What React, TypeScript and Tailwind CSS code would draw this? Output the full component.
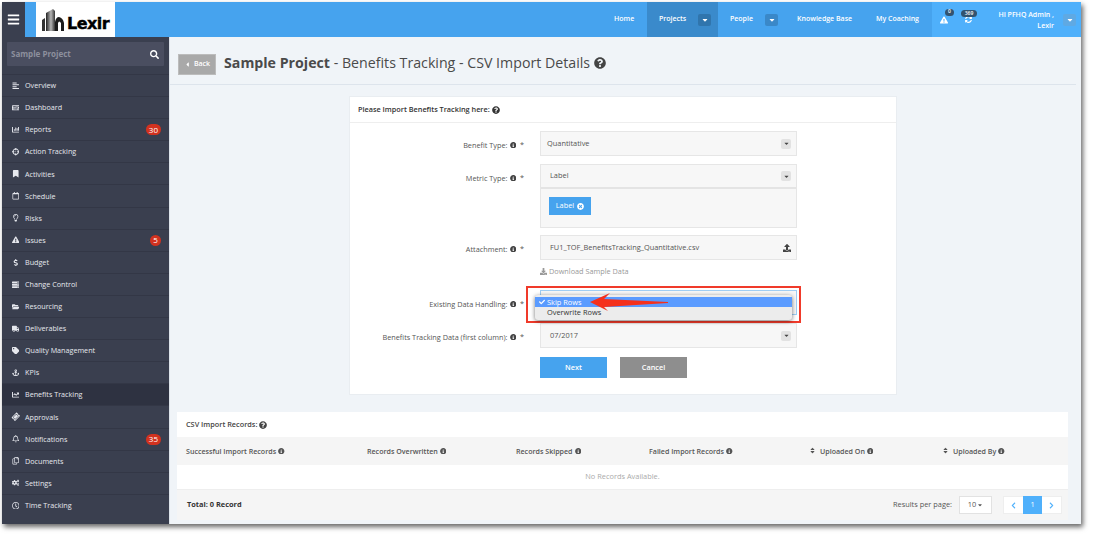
import { ReactNode } from "react";
import {
  FaAlignLeft, FaAnchor, FaBars, FaBookmark, FaCaretDown, FaCaretLeft, FaChartBar, FaChartLine, FaCheck,
  FaChevronLeft, FaChevronRight, FaCogs, FaCrosshairs, FaDollarSign, FaDownload, FaExclamationTriangle,
  FaFolderOpen, FaInfoCircle, FaKeyboard, FaQuestionCircle, FaRegBell, FaRegCalendar, FaRegClock, FaRegCopy,
  FaRegLightbulb, FaSearch, FaServer, FaSort, FaSyncAlt, FaTag, FaTicketAlt, FaTimesCircle, FaTruck, FaUpload,
} from "react-icons/fa";

const menu = [
  { name: "Overview", icon: <FaAlignLeft /> },
  { name: "Dashboard", icon: <FaKeyboard /> },
  { name: "Reports", icon: <FaChartBar />, badge: "30" },
  { name: "Action Tracking", icon: <FaCrosshairs /> },
  { name: "Activities", icon: <FaBookmark /> },
  { name: "Schedule", icon: <FaRegCalendar /> },
  { name: "Risks", icon: <FaRegLightbulb /> },
  { name: "Issues", icon: <FaExclamationTriangle />, badge: "5" },
  { name: "Budget", icon: <FaDollarSign /> },
  { name: "Change Control", icon: <FaServer /> },
  { name: "Resourcing", icon: <FaFolderOpen /> },
  { name: "Deliverables", icon: <FaTruck /> },
  { name: "Quality Management", icon: <FaTag /> },
  { name: "KPIs", icon: <FaAnchor /> },
  { name: "Benefits Tracking", icon: <FaChartLine />, active: true },
  { name: "Approvals", icon: <FaTicketAlt className="-rotate-45" /> },
  { name: "Notifications", icon: <FaRegBell />, badge: "35" },
  { name: "Documents", icon: <FaRegCopy /> },
  { name: "Settings", icon: <FaCogs /> },
  { name: "Time Tracking", icon: <FaRegClock /> },
];

const CaretBtn = ({ className }: { className: string }) => (
  <span className={`flex h-[12px] w-[13px] items-center justify-center rounded-[2px] text-[8px] text-white ${className}`}>
    <FaCaretDown />
  </span>
);

const SelectCaret = () => (
  <span className="flex h-[10px] w-[10px] items-center justify-center rounded-[2px] bg-[#e2e2e2] text-[7px] text-[#444]">
    <FaCaretDown />
  </span>
);

const Field = ({ label, children, className = "" }: { label: string; children: ReactNode; className?: string }) => (
  <div className={`flex items-start ${className}`}>
    <div className="flex h-[25px] w-[175px] items-center justify-end gap-[2px] pt-[3px] text-[7.3px] text-[#555]">
      <span>{label}</span>
      <FaInfoCircle className="text-[6.5px] text-[#444]" />
      <span className="ml-[2px] w-[5px]">*</span>
    </div>
    <div className="ml-[15px] w-[257px]">{children}</div>
  </div>
);

const Input = ({ children, className = "" }: { children: ReactNode; className?: string }) => (
  <div className={`flex h-[25px] items-center justify-between border border-[#e6e6e6] bg-[#f7f7f7] pl-[6px] pr-[5px] text-[7.4px] text-[#555] ${className}`}>
    {children}
  </div>
);

const Header = () => (
  <header className="flex h-[35px] bg-[#46a3ee] text-[7px] font-semibold text-white">
    <button className="flex w-[23px] items-center justify-center bg-[#3a3f4f] text-[13px]">
      <FaBars />
    </button>
    <div className="ml-[11px] flex w-[79px] items-end bg-white pb-[6px] pl-[6px]">
      <svg width="22" height="23" viewBox="0 0 22 23">
        <defs>
          <linearGradient id="tower" x1="0" y1="0" x2="1" y2="0">
            <stop offset="0" stopColor="#222" />
            <stop offset="0.55" stopColor="#b5b5b5" />
            <stop offset="1" stopColor="#333" />
          </linearGradient>
        </defs>
        <path d="M0 23V12L3 10V23Z" fill="#333" />
        <path d="M4 23V5L11 1L13 3V23Z" fill="url(#tower)" />
        <path d="M13 23V14Q14 9 17 9Q21 10 22 15V23H19V15Q17 12 16 15V23Z" fill="#1c1c1c" />
      </svg>
      <span className="ml-[3px] font-['DejaVu_Sans'] text-[16px] font-bold leading-[14px] tracking-[-0.5px] text-black [-webkit-text-stroke:0.4px_black]">Lexir</span>
    </div>
    <div className="flex-1" />
    <nav className="flex w-[332px] items-center pl-[14px]">
      <span className="w-[33px]">Home</span>
      <div className="flex h-full w-[71px] items-center bg-[#3a8acb] pl-[12px]">
        <span className="w-[39px]">Projects</span>
        <CaretBtn className="bg-[#3075ad]" />
      </div>
      <span className="ml-[12px] w-[35px]">People</span>
      <CaretBtn className="bg-[#3a88c8]" />
      <span className="ml-[19px] w-[79px]">Knowledge Base</span>
      <span>My Coaching</span>
    </nav>
    <div className="flex w-[149px] items-center bg-[#4fb0fb]">
      <div className="relative ml-[8px] text-[8px]">
        <FaExclamationTriangle />
        <span className="absolute left-[5px] top-[-7px] flex h-[7px] w-[9px] items-center justify-center rounded-full bg-[#33536f] text-[5px]">0</span>
      </div>
      <div className="relative ml-[17px] text-[7px]">
        <FaSyncAlt />
        <span className="absolute left-[-4px] top-[-6px] flex h-[7px] w-[16px] items-center justify-center rounded-full bg-[#33536f] text-[5px]">369</span>
      </div>
      <div className="ml-[8px] w-[74px] whitespace-nowrap text-right leading-[11px]">
        <div>HI PFHQ Admin ,</div>
        <div>Lexir</div>
      </div>
      <CaretBtn className="ml-[9px] shrink-0 bg-[#5fa9e3]" />
    </div>
  </header>
);

const Sidebar = () => (
  <aside className="flex w-[167px] shrink-0 flex-col bg-[#3a3f4f] pt-[5px] text-[7.2px] text-[#e6e8ee]">
    <div className="mx-[5px] mb-[8px] flex h-[24px] items-center justify-between rounded-[1px] bg-[#4a4e60] pl-[4px] pr-[5px]">
      <span className="text-[8px] font-bold text-[#8d909d]">Sample Project</span>
      <FaSearch className="text-[9px] text-white" />
    </div>
    {menu.map((item) => (
      <div
        key={item.name}
        className={`flex h-[22.1px] items-center border-t border-[#333746] pl-[6px] pr-[8px] ${item.active ? "bg-[#2e3241]" : ""}`}
      >
        <span className="flex w-[15px] justify-center text-[7.5px]">{item.icon}</span>
        <span className="ml-[2px] flex-1">{item.name}</span>
        {item.badge && (
          <span className="flex h-[11px] min-w-[11px] items-center justify-center rounded-full bg-[#d2321f] px-[3px] text-[8px] text-white">
            {item.badge}
          </span>
        )}
      </div>
    ))}
  </aside>
);

const ImportCard = () => (
  <section className="mx-auto mt-[11px] h-[299px] w-[548px] border border-[#e9edf1] bg-white">
    <div className="flex h-[26px] items-center gap-[2px] border-b border-[#eeeeee] pl-[8px] text-[7.3px] font-semibold text-[#333]">
      Please Import Benefits Tracking here: <FaQuestionCircle className="text-[8px]" />
    </div>
    <div className="pt-[8px]">
      <Field label="Benefit Type:">
        <Input>
          Quantitative
          <SelectCaret />
        </Input>
      </Field>
      <Field label="Metric Type:" className="mt-[8px]">
        <div className="h-[64px] border border-[#e6e6e6] bg-[#f7f7f7]">
          <div className="flex h-[24px] items-center justify-between border-b-2 border-[#e4e4e4] pl-[9px] pr-[5px] text-[7.4px] text-[#555]">
            Label
            <SelectCaret />
          </div>
          <div className="ml-[8px] mt-[8px] flex h-[18px] w-[42px] items-center justify-center gap-[3px] bg-[#46a3ee] text-[7.4px] text-white">
            Label <FaTimesCircle className="text-[7px]" />
          </div>
        </div>
      </Field>
      <Field label="Attachment:" className="mt-[7px]">
        <Input className="pl-[9px]">
          FU1_TOF_BenefitsTracking_Quantitative.csv
          <FaUpload className="text-[8px] text-[#444]" />
        </Input>
        <div className="mt-[6px] flex h-[10px] items-center gap-[2px] text-[7.3px] text-[#999]">
          <FaDownload className="text-[7px]" /> Download Sample Data
        </div>
      </Field>
      <Field label="Existing Data Handling:" className="mt-[14px]">
        <div className="relative h-[25px] border border-[#9fcdf3] bg-[#f7f7f7]">
          <div className="absolute left-[-15px] top-[-5px] z-10 h-[37px] w-[275px] border-2 border-[#f03a2a]" />
          <div className="absolute left-[-6px] top-[4px] z-10 h-[25px] w-[257px] rounded-[3px] bg-[#ececec] py-[2px] text-[7.4px] leading-[10px] text-[#333] shadow-[0_1px_4px_rgba(0,0,0,0.55)]">
            <div className="flex h-[10px] items-center bg-[#5a9bff] text-white">
              <FaCheck className="ml-[3px] w-[8px] text-[6px]" />
              <span className="ml-[1px]">Skip Rows</span>
            </div>
            <div className="pl-[12px]">Overwrite Rows</div>
          </div>
          <svg width="78" height="19" viewBox="0 0 78 19" className="absolute left-[49px] top-[2px] z-20">
            <path d="M0 9L20 0L14 6L78 9V10L14 14L18 18Z" fill="#f5301c" />
          </svg>
        </div>
      </Field>
      <Field label="Benefits Tracking Data (first column):" className="mt-[8px]">
        <Input className="pl-[9px]">
          07/2017
          <SelectCaret />
        </Input>
        <div className="mt-[9px] flex gap-[13px] text-[7.3px] font-semibold text-white">
          <button className="h-[21px] w-[67px] bg-[#46a3ee]">Next</button>
          <button className="h-[21px] w-[67px] bg-[#8e8e8e]">Cancel</button>
        </div>
      </Field>
    </div>
  </section>
);

const Th = ({ label, sort }: { label: string; sort?: boolean }) => (
  <div className="flex items-center gap-[2px]">
    {sort && <FaSort className="mr-[2px] text-[7px]" />}
    {label}
    <FaInfoCircle className="text-[6.5px]" />
  </div>
);

const RecordsCard = () => (
  <section className="ml-[7px] mt-[17px] w-[891px] bg-white">
    <div className="flex h-[25px] items-center gap-[2px] pl-[9px] text-[7.3px] font-semibold text-[#444]">
      CSV Import Records: <FaQuestionCircle className="text-[8px]" />
    </div>
    <div className="grid h-[28px] grid-cols-[181px_149px_133px_160px_133px_1fr] items-center bg-[#f5f5f5] pl-[9px] text-[7.1px] font-semibold text-[#555]">
      <Th label="Successful Import Records" />
      <Th label="Records Overwritten" />
      <Th label="Records Skipped" />
      <Th label="Failed Import Records" />
      <Th label="Uploaded On" sort />
      <Th label="Uploaded By" sort />
    </div>
    <div className="flex h-[25px] items-center justify-center border-b border-[#eeeeee] text-[7.4px] text-[#aaa]">No Records Available.</div>
    <div className="flex h-[30px] items-center justify-between bg-[#f5f5f5] pl-[10px] pr-[6px] text-[7.4px] text-[#555]">
      <span className="font-bold text-[#333]">Total: 0 Record</span>
      <div className="flex items-center">
        <span>Results per page:</span>
        <span className="ml-[7px] flex h-[18px] w-[33px] items-center justify-center gap-[1px] border border-[#e2e2e2] bg-white">
          10 <FaCaretDown className="text-[6px]" />
        </span>
        <div className="ml-[11px] flex h-[18px] items-center border border-[#eeeeee] bg-white text-[#4fb0fb]">
          <span className="flex w-[19px] justify-center text-[7px]"><FaChevronLeft /></span>
          <span className="flex h-[18px] w-[19px] items-center justify-center bg-[#4fb0fb] text-white">1</span>
          <span className="flex w-[19px] justify-center text-[7px]"><FaChevronRight /></span>
        </div>
      </div>
    </div>
  </section>
);

export default function App() {
  return (
    <div className="h-[537px] w-[1093px] overflow-hidden bg-white pl-[2px] pt-[2px] font-['Open_Sans',sans-serif]">
      <div className="flex h-[522px] w-[1079px] flex-col overflow-hidden shadow-[2px_3px_5px_rgba(0,0,0,0.6)]">
        <Header />
        <div className="flex min-h-0 flex-1">
          <Sidebar />
          <main className="flex-1 border-l border-[#dde3ea] bg-[#f0f4f8] pr-[5px]">
            <div className="flex h-[48px] items-center border-b border-[#dde4ec] pl-[8px] pt-[8px]">
              <button className="flex h-[21px] w-[38px] items-center justify-center gap-[3px] border border-[#bcbcbc] bg-[#a9a9a9] text-[7px] font-semibold text-white">
                <FaCaretLeft className="text-[7px]" /> Back
              </button>
              <h1 className="ml-[8px] mt-[-3px] flex items-center gap-[4px] text-[14.2px] text-[#4a4a4a]">
                <span><b className="font-bold">Sample Project</b> - Benefits Tracking - CSV Import Details</span>
                <FaQuestionCircle className="text-[12px] text-[#444]" />
              </h1>
            </div>
            <ImportCard />
            <RecordsCard />
          </main>
        </div>
      </div>
    </div>
  );
}
